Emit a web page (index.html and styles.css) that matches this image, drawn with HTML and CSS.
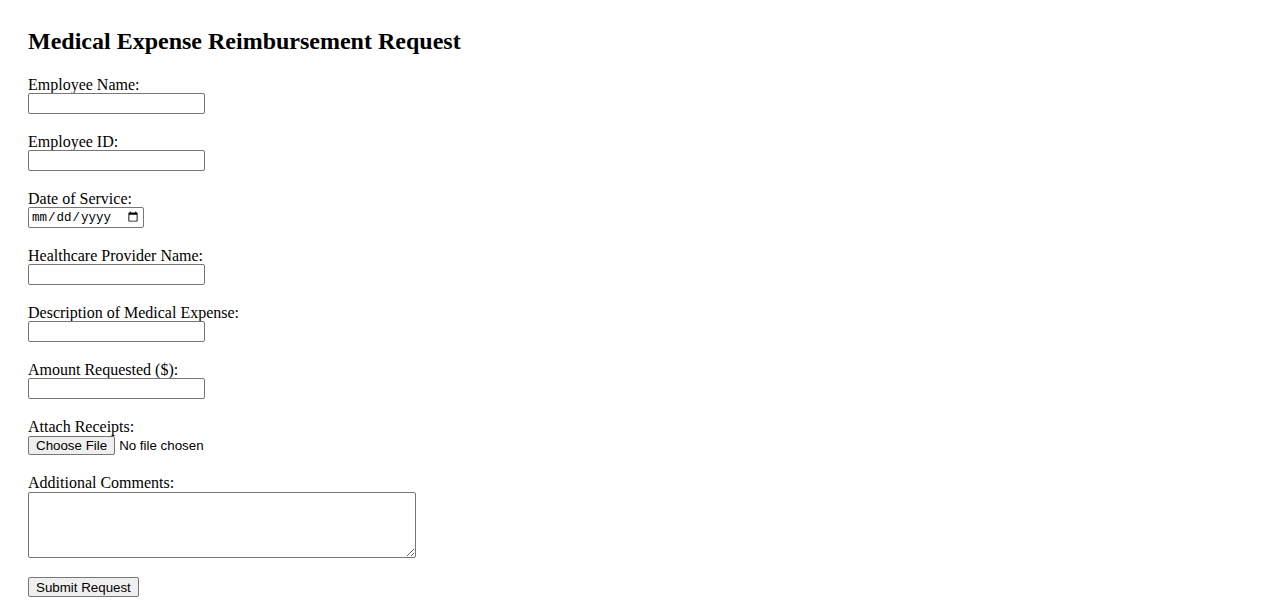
FILE: index.html
```html
<!DOCTYPE html>
<html lang="en">
<head>
<meta charset="utf-8">
<title>Medical Expense Reimbursement Request</title>
<link rel="stylesheet" href="styles.css">
</head>
<body>
<main class="page">
  <h2 class="title">Medical Expense Reimbursement Request</h2>
  <form class="form">
    <div class="field">
      <label class="label" for="name">Employee Name:</label>
      <input class="text" type="text" id="name">
    </div>
    <div class="field">
      <label class="label" for="eid">Employee ID:</label>
      <input class="text" type="text" id="eid">
    </div>
    <div class="field">
      <label class="label" for="dos">Date of Service:</label>
      <input class="date" type="date" id="dos">
    </div>
    <div class="field">
      <label class="label" for="prov">Healthcare Provider Name:</label>
      <input class="text" type="text" id="prov">
    </div>
    <div class="field">
      <label class="label" for="desc">Description of Medical Expense:</label>
      <input class="text" type="text" id="desc">
    </div>
    <div class="field">
      <label class="label" for="amt">Amount Requested ($):</label>
      <input class="text" type="text" id="amt">
    </div>
    <div class="field">
      <label class="label" for="rec">Attach Receipts:</label>
      <input class="file" type="file" id="rec">
    </div>
    <div class="field">
      <label class="label" for="cmt">Additional Comments:</label>
      <textarea class="area" id="cmt"></textarea>
    </div>
    <div class="field">
      <button class="submit" type="submit">Submit Request</button>
    </div>
  </form>
</main>
</body>
</html>
```
FILE: styles.css
```css
html, body {
  margin: 0;
  padding: 0;
  background: #fff;
}
body {
  font-family: "Liberation Serif", "Times New Roman", serif;
  font-size: 16px;
  color: #000;
}
.page {
  padding: 27px 28px 0;
}
.title {
  margin: 0 0 21px;
  font-size: 24px;
  font-weight: bold;
  line-height: 28px;
}
.form {
  display: flex;
  flex-direction: column;
  gap: 19px;
}
.field {
  display: flex;
  flex-direction: column;
  align-items: flex-start;
}
.label {
  line-height: 17px;
  height: 17px;
}
.text, .date, .area {
  box-sizing: border-box;
  border: 1px solid #767676;
  border-radius: 2px;
  margin: 0;
  background: #fff;
}
.text {
  width: 177px;
  height: 21px;
  padding: 1px 2px;
  font-family: "Liberation Sans", Arial, sans-serif;
  font-size: 13.33px;
}
.date {
  width: 116px;
  height: 21px;
  padding: 1px 2px;
  font-family: "Liberation Mono", "DejaVu Sans Mono", monospace;
  font-size: 12.5px;
}
.file {
  margin: 1px 0 0;
  height: 19px;
  font-family: "Liberation Sans", Arial, sans-serif;
  font-size: 13.33px;
}
.file::file-selector-button {
  height: 19px;
  padding: 0 7px;
  margin-right: 4px;
  border: 1px solid #767676;
  border-radius: 2px;
  background: #efefef;
  font-family: "Liberation Sans", Arial, sans-serif;
  font-size: 13.33px;
  color: #000;
}
.area {
  width: 388px;
  height: 66px;
  margin-top: 1px;
  padding: 2px;
  font-family: "Liberation Mono", monospace;
  font-size: 13.33px;
  resize: both;
}
.submit {
  box-sizing: border-box;
  height: 20px;
  padding: 0 7px;
  margin: 0;
  border: 1px solid #767676;
  border-radius: 2px;
  background: #efefef;
  font-family: "Liberation Sans", Arial, sans-serif;
  font-size: 13.33px;
  color: #000;
}
```
